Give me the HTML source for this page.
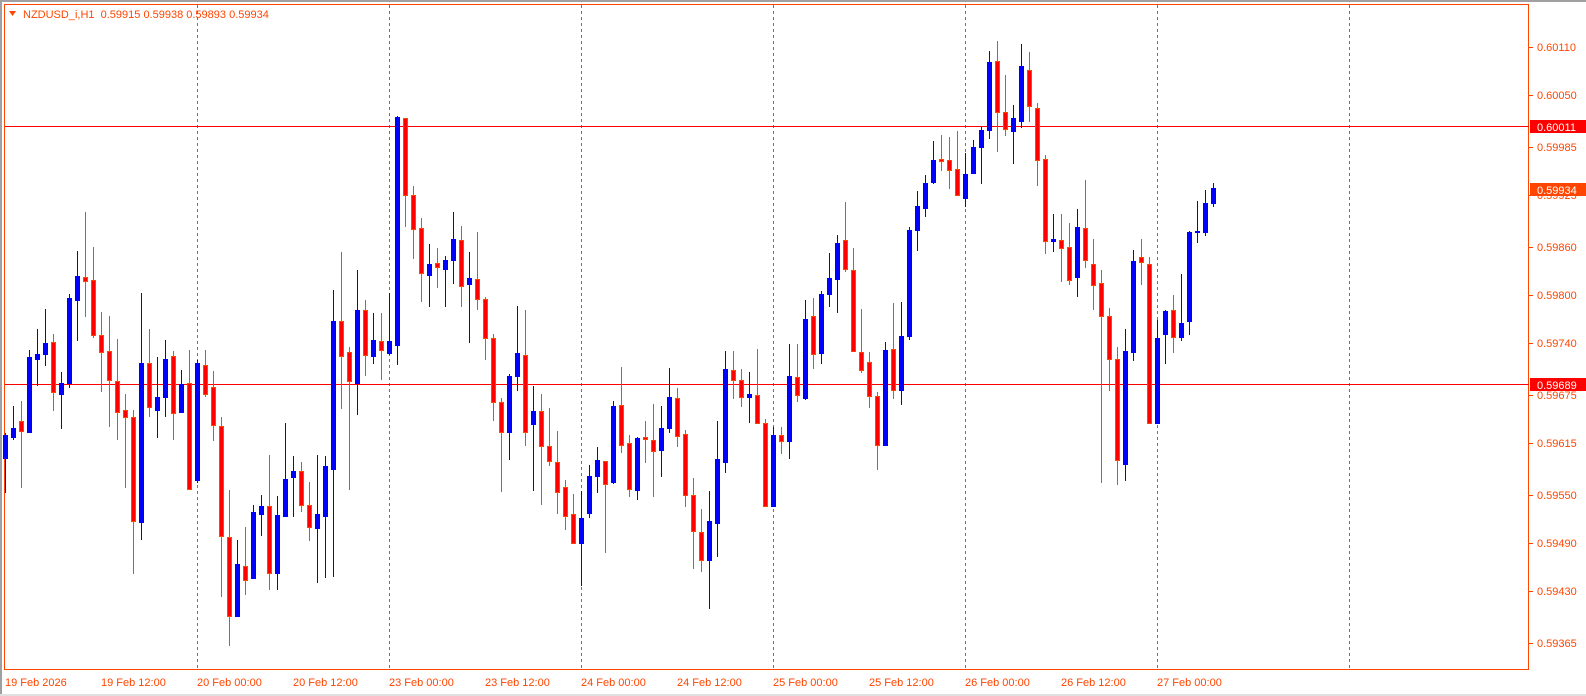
<!DOCTYPE html>
<html><head><meta charset="utf-8"><style>
html,body{margin:0;padding:0;background:#fff;width:1586px;height:696px;overflow:hidden}
svg{display:block}
text{font-family:"Liberation Sans",sans-serif;font-size:11px}
</style></head><body>
<svg id="s" width="1586" height="696" xmlns="http://www.w3.org/2000/svg">
<rect x="0" y="0" width="1586" height="696" fill="#fff"/>
<rect x="0" y="0" width="1586" height="2" fill="#a0a0a0"/>
<rect x="0" y="0" width="2" height="696" fill="#a0a0a0"/>
<rect x="0" y="694" width="1586" height="2" fill="#e0e0e0"/>
<g id="grid" stroke="#ff4500" stroke-width="1" stroke-dasharray="3,3">
<line x1="197.5" y1="5" x2="197.5" y2="670"/>
<line x1="389.5" y1="5" x2="389.5" y2="670"/>
<line x1="581.5" y1="5" x2="581.5" y2="670"/>
<line x1="773.5" y1="5" x2="773.5" y2="670"/>
<line x1="965.5" y1="5" x2="965.5" y2="670"/>
<line x1="1157.5" y1="5" x2="1157.5" y2="670"/>
<line x1="1349.5" y1="5" x2="1349.5" y2="670"/>
</g>
<rect x="4.5" y="4.5" width="1524" height="665" fill="none" stroke="#ff4500" stroke-width="1"/>
<line x1="5" y1="126.5" x2="1529" y2="126.5" stroke="#ff0000"/>
<line x1="5" y1="384.5" x2="1529" y2="384.5" stroke="#ff0000"/>
<g id="c"></g>
<polygon points="9,11 16,11 12.5,16" fill="#ff4500"/>
<text x="23" y="18" fill="#ff4500">NZDUSD_i,H1&#160; 0.59915 0.59938 0.59893 0.59934</text>
<g fill="#ff4500" id="ax"></g>
<rect x="1530" y="120" width="56" height="13" fill="#ff0000"/>
<text x="1537" y="131" fill="#fff">0.60011</text>
<rect x="1530" y="183" width="56" height="13" fill="#ff4500"/>
<text x="1537" y="194" fill="#fff">0.59934</text>
<rect x="1530" y="378" width="56" height="13" fill="#ff0000"/>
<text x="1537" y="389" fill="#fff">0.59689</text>
<g fill="#ff4500">
<text x="5" y="686">19 Feb 2026</text>
<text x="101" y="686">19 Feb 12:00</text>
<text x="197" y="686">20 Feb 00:00</text>
<text x="293" y="686">20 Feb 12:00</text>
<text x="389" y="686">23 Feb 00:00</text>
<text x="485" y="686">23 Feb 12:00</text>
<text x="581" y="686">24 Feb 00:00</text>
<text x="677" y="686">24 Feb 12:00</text>
<text x="773" y="686">25 Feb 00:00</text>
<text x="869" y="686">25 Feb 12:00</text>
<text x="965" y="686">26 Feb 00:00</text>
<text x="1061" y="686">26 Feb 12:00</text>
<text x="1157" y="686">27 Feb 00:00</text>
</g>
</svg>
<script>
var NS="http://www.w3.org/2000/svg";
function el(p,t,a){var e=document.createElementNS(NS,t);for(var k in a)e.setAttribute(k,a[k]);p.appendChild(e);return e;}
var ax=document.getElementById("ax");
var labs=[["0.60110",46.7],["0.60050",94.8],["0.59985",146.9],["0.59925",195],["0.59860",247],["0.59800",295],["0.59740",343],["0.59675",395],["0.59615",443],["0.59550",495],["0.59490",543],["0.59430",591],["0.59365",643]];
labs.forEach(function(l){var y=Math.round(l[1]);el(ax,"rect",{x:1529,y:y,width:4,height:1});var t=el(ax,"text",{x:1537,y:y+4});t.textContent=l[0];});
var D=[
"b 435 458 433 492","b 428 437 406 439","r 421 431 401 487","b 357 432 350 432","b 354 359 329 385","b 343 354 309 365","r 342 392 334 410","b 383 394 372 428","b 298 383 294 387","b 276 300 251 340",
"r 277 281 212 316","r 280 335 247 337","r 335 352 312 391","r 351 380 316 426","r 381 412 339 439","r 410 417 394 487","r 417 521 410 573","b 363 522 293 539","r 363 407 329 416","b 397 410 357 437",
"b 359 397 340 416","r 356 413 351 439","b 384 412 370 412","r 383 489 350 489","b 363 480 360 482",
"r 365 394 350 396","r 387 425 371 440","r 426 536 417 596","r 537 616 490 645","b 564 616 540 616","r 566 580 527 594","b 512 578 505 578","b 506 514 495 535","r 506 573 455 589","b 515 573 496 589",
"b 479 516 423 516","b 471 477 456 516","r 471 505 462 511","r 505 527 482 540","b 514 528 455 582","b 466 516 456 577","b 321 469 290 576","r 321 356 252 408","r 352 381 347 489","b 310 383 270 414",
"r 310 355 300 375","b 340 356 313 363","r 341 350 313 379","b 341 353 293 354",
"b 117 345 116 364","r 118 195 118 226","r 195 229 186 258","r 228 273 218 301","b 264 275 244 306","r 263 267 248 287","b 260 269 256 306","b 239 260 212 283","r 240 286 226 306","b 278 284 252 342",
"r 279 299 232 309","r 299 338 297 359","r 338 402 334 420","r 402 432 398 491","b 376 432 374 459","b 353 376 306 390","r 355 432 310 445","b 411 424 386 490","r 411 446 394 504","r 446 461 408 465",
"r 462 492 431 513","r 487 516 480 529","r 514 543 494 543","b 518 543 491 585","b 476 513 465 517","b 460 476 447 492",
"r 461 484 461 552","b 406 482 401 483","r 405 445 367 452","r 443 489 435 496","b 438 490 437 499","r 437 439 421 462","r 440 451 404 496","b 428 450 406 476","b 397 428 368 432","r 398 436 388 446",
"r 434 495 430 506","r 495 531 478 568","r 532 560 509 571","b 521 560 491 608","b 459 523 421 556","b 369 462 351 472","r 370 380 351 398","r 380 397 369 406","b 394 397 372 422","r 395 423 349 423",
"r 423 506 419 506","b 435 506 427 506","r 435 441 427 453","b 376 441 344 458","r 377 395 344 401",
"b 319 398 300 399","r 316 354 298 368","b 294 353 291 363","b 278 294 253 306","b 243 279 235 312","r 240 269 202 271","r 270 351 248 351","r 352 370 309 372","r 362 396 352 407","r 396 445 392 469",
"b 350 445 342 445","r 349 390 303 398","b 336 390 302 404","b 230 336 227 339","b 206 230 191 250","b 183 208 175 216","b 160 182 141 183","r 159 161 135 170","r 160 170 137 188","r 169 195 131 195",
"b 174 198 153 206","b 147 173 140 173","b 130 147 127 183","b 62 130 51 138","r 61 112 41 151",
"r 112 129 75 135","b 118 131 105 163","b 66 121 44 127","r 70 106 52 121","r 108 160 103 185","r 159 241 155 253","b 239 241 214 251","r 240 248 214 281","r 247 280 223 284","b 227 277 209 296",
"r 228 260 180 267","r 264 285 239 309","r 283 316 270 482","r 316 359 308 390","r 359 460 347 484","b 351 464 329 480","b 261 352 250 360","r 257 262 239 284","r 264 423 257 423","b 338 423 320 423",
"b 311 334 310 363","r 310 337 295 352","b 323 337 274 340","b 232 321 231 334","b 231 232 201 242","b 203 232 190 235","b 188 203 183 206"
];
var g=document.getElementById("c");
D.forEach(function(s,i){var p=s.split(" "),t=p[0],bt=+p[1],bb=+p[2],wt=+p[3],wb=+p[4];
 if(wt>bt)wt=bt; if(wb<bb)wb=bb;
 var x=3+8*i;
 if(t=="b"){
  el(g,"rect",{x:x+2,y:wt,width:1,height:wb-wt+1,fill:"#0000ff"});
  el(g,"rect",{x:x,y:bt,width:5,height:Math.max(1,bb-bt+1),fill:"#0000ff"});
 }else{
  el(g,"rect",{x:x+2,y:wt,width:1,height:wb-wt+1,fill:"#ff4500"});
  if(bb-bt<2){el(g,"rect",{x:x,y:bt,width:5,height:Math.max(1,bb-bt+1),fill:"#ff4500"});}
  else el(g,"rect",{x:x+0.5,y:bt+0.5,width:4,height:bb-bt,fill:"#ff0000",stroke:"#ff4500","stroke-width":1});
 }
});
</script>
</body></html>
